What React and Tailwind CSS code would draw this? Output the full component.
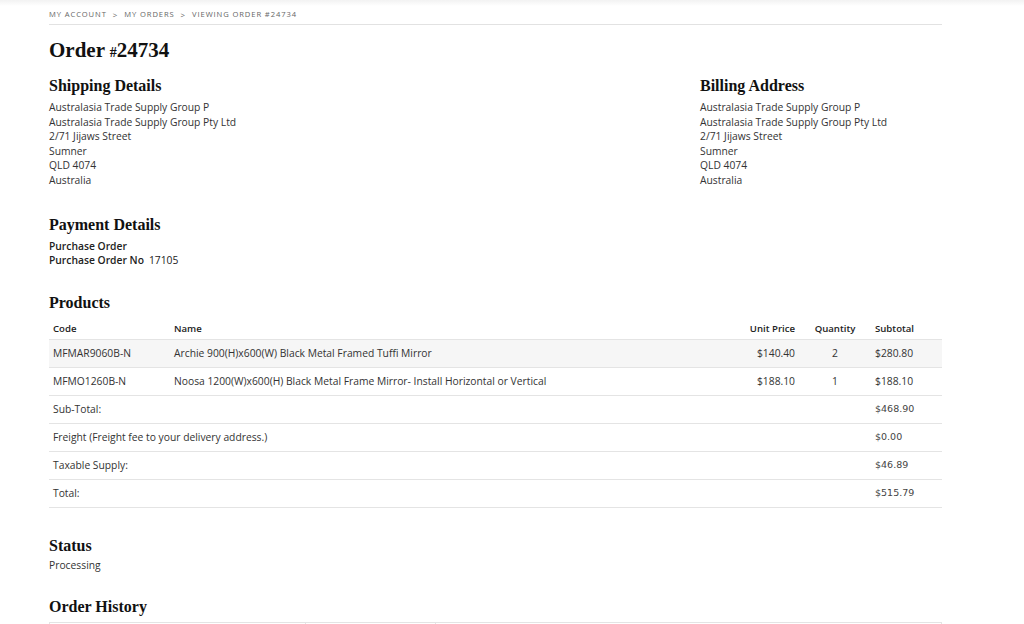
import React from 'react';

const sans = "font-['Open_Sans',sans-serif]";
const serif = "font-['Liberation_Serif',serif]";

const address = [
  'Australasia Trade Supply Group P',
  'Australasia Trade Supply Group Pty Ltd',
  '2/71 Jijaws Street',
  'Sumner',
  'QLD 4074',
  'Australia',
];

const products = [
  { code: 'MFMAR9060B-N', name: 'Archie 900(H)x600(W) Black Metal Framed Tuffi Mirror', price: '$140.40', qty: 2, subtotal: '$280.80' },
  { code: 'MFMO1260B-N', name: 'Noosa 1200(W)x600(H) Black Metal Frame Mirror- Install Horizontal or Vertical', price: '$188.10', qty: 1, subtotal: '$188.10' },
];

const totals = [
  { label: 'Sub-Total:', value: '$468.90' },
  { label: 'Freight (Freight fee to your delivery address.)', value: '$0.00' },
  { label: 'Taxable Supply:', value: '$46.89' },
  { label: 'Total:', value: '$515.79' },
];

const Heading = ({ children, className = '' }) => (
  <h2 className={`${serif} text-[16px] font-bold text-[#111] leading-none ${className}`}>{children}</h2>
);

const Address = ({ title }) => (
  <div>
    <Heading>{title}</Heading>
    <div className="mt-[6px] text-[10.3px] leading-[14.6px] text-[#333]">
      {address.map((line) => (
        <div key={line}>{line}</div>
      ))}
    </div>
  </div>
);

export default function App() {
  return (
    <div className={`min-h-screen bg-white ${sans}`}>
      <div className="h-[6px] bg-gradient-to-b from-[#f2f2f2] to-white" />
      <div className="w-[893px] ml-[49px]">
        {/* Breadcrumb */}
        <div className="flex items-center gap-[6px] pt-[3px] pb-[3px] border-b border-[#e2e2e2] text-[7.6px] tracking-[0.9px] uppercase text-[#666]">
          <span>My Account</span>
          <span className="text-[8px]">&gt;</span>
          <span>My Orders</span>
          <span className="text-[8px]">&gt;</span>
          <span>Viewing Order #24734</span>
        </div>

        <h1 className={`${serif} mt-[15px] text-[21px] font-bold text-[#111] leading-none`}>
          Order <span className="text-[14px]">#</span>24734
        </h1>

        <div className="mt-[17px] flex">
          <div className="w-[651px]">
            <Address title="Shipping Details" />
          </div>
          <Address title="Billing Address" />
        </div>

        <Heading className="mt-[29px]">Payment Details</Heading>
        <div className="mt-[6px] text-[10.3px] leading-[14px] text-[#222]">
          <div className="font-semibold">Purchase Order</div>
          <div>
            <span className="font-semibold">Purchase Order No</span>
            <span className="ml-[5px]">17105</span>
          </div>
        </div>

        <Heading className="mt-[28px]">Products</Heading>
        <table className="mt-[8px] w-full border-collapse text-[10.3px] text-[#333]">
          <thead>
            <tr className="h-[21px] text-[9.6px] text-[#222]">
              <th className="text-left pl-[4px] w-[125px] font-semibold">Code</th>
              <th className="text-left font-semibold">Name</th>
              <th className="text-right w-[100px] font-semibold">Unit Price</th>
              <th className="text-center w-[80px] font-semibold">Quantity</th>
              <th className="text-left w-[67px] font-semibold">Subtotal</th>
            </tr>
          </thead>
          <tbody>
            {products.map((p, i) => (
              <tr key={p.code} className={`h-[28px] border-t border-[#e4e4e4] ${i === 0 ? 'bg-[#f6f6f6]' : ''}`}>
                <td className="pl-[4px]">{p.code}</td>
                <td>{p.name}</td>
                <td className="text-right">{p.price}</td>
                <td className="text-center">{p.qty}</td>
                <td>{p.subtotal}</td>
              </tr>
            ))}
            {totals.map((t) => (
              <tr key={t.label} className="h-[28px] border-t border-[#e4e4e4]">
                <td colSpan={4} className="pl-[4px]">{t.label}</td>
                <td className="font-['DejaVu_Sans',sans-serif] text-[9.5px] text-[#444]">{t.value}</td>
              </tr>
            ))}
            <tr className="border-t border-[#e4e4e4]">
              <td colSpan={5} />
            </tr>
          </tbody>
        </table>

        <Heading className="mt-[30px]">Status</Heading>
        <div className="mt-[4px] text-[10.3px] text-[#333]">Processing</div>

        <Heading className="mt-[25px]">Order History</Heading>
        <div className="mt-[7px] flex h-[30px] border border-[#e4e4e4]">
          <div className="w-[256px] border-r border-[#e4e4e4]" />
          <div className="w-[130px] border-r border-[#e4e4e4]" />
          <div className="flex-1" />
        </div>
      </div>
    </div>
  );
}
